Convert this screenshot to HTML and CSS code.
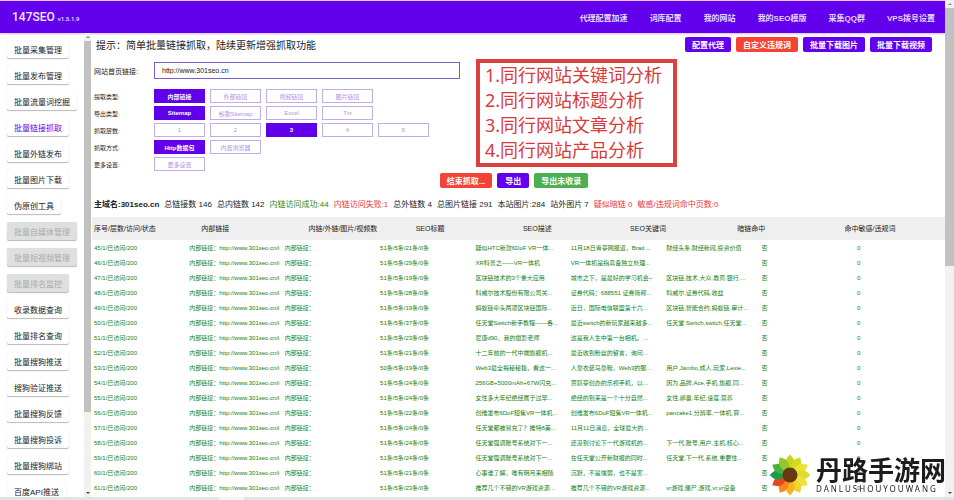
FILE: index.html
```html
<!DOCTYPE html>
<html lang="zh-CN">
<head>
<meta charset="utf-8">
<title>147SEO</title>
<link rel="stylesheet" href="styles.css">
</head>
<body>
<div class="window">
  <div class="page">
    <header class="topbar">
      <div class="brand">147SEO <small>v1.5.1.9</small></div>
      <nav class="topnav">
        <a href="#">代理配置加速</a><a href="#">词库配置</a><a href="#">我的网站</a><a href="#">我的SEO模版</a><a href="#">采集QQ群</a><a href="#">VPS拨号设置</a>
      </nav>
    </header>
    <div class="body">
      <aside class="sidebar">
        <button>批量采集管理</button>
        <button>批量发布管理</button>
        <button>批量流量词挖掘</button>
        <button class="current">批量链接抓取</button>
        <button>批量外链发布</button>
        <button>批量图片下载</button>
        <button>伪原创工具</button>
        <button disabled>批量自媒体管理</button>
        <button disabled>批量短视频管理</button>
        <button disabled>批量排名监控</button>
        <button>收录数据查询</button>
        <button>批量排名查询</button>
        <button>批量搜狗推送</button>
        <button>搜狗验证推送</button>
        <button>批量搜狗反馈</button>
        <button>批量搜狗投诉</button>
        <button>批量搜狗绑站</button>
        <button>百度API推送</button>
      </aside>
      <div class="scroll side-scroll"><i class="up"></i><div class="thumb"></div><i class="down"></i></div>
      <main class="main">
        <div class="hint-row">
          <p class="hint">提示：简单批量链接抓取，陆续更新增强抓取功能</p>
          <div class="buttons">
            <button class="btn">配置代理</button>
            <button class="btn red">自定义违规词</button>
            <button class="btn">批量下载图片</button>
            <button class="btn">批量下载视频</button>
          </div>
        </div>
        <div class="url-row">
          <label for="url">网站首页链接:</label>
          <input id="url" type="text" value="http://www.301seo.cn">
        </div>
        <div class="options">
          <div class="option"><span>提取类型:</span><button class="on">内部链接</button><button>外部链接</button><button>视频链接</button><button>图片链接</button></div>
          <div class="option"><span>导出类型:</span><button class="on">Sitemap</button><button>谷歌Sitemap</button><button>Excel</button><button>Txt</button></div>
          <div class="option"><span>抓取层数:</span><button>1</button><button>2</button><button class="on">3</button><button>4</button><button>5</button></div>
          <div class="option"><span>抓取方式:</span><button class="on">Http数据包</button><button>内置浏览器</button></div>
          <div class="option"><span>更多设置:</span><button>更多设置</button></div>
        </div>
        <div class="actions">
          <button class="btn red">结束抓取...</button>
          <button class="btn">导出</button>
          <button class="btn green">导出未收录</button>
        </div>
        <div class="stats">
          <b>主域名:301seo.cn</b><span>总链接数 146</span><span>总内链数 142</span><span class="ok">内链访问成功:44</span><span class="bad">内链访问失败:1</span><span>总外链数 4</span><span>总图片链接 291</span><span>本站图片:284</span><span>站外图片 7</span><span class="bad">疑似暗链 0</span><span class="bad">敏感/违规词命中页数:0</span>
        </div>
        <table>
          <thead>
            <tr><th>序号/层数/访问/状态</th><th>内部链接</th><th>内链/外链/图片/视频数</th><th>SEO标题</th><th>SEO描述</th><th>SEO关键词</th><th>暗链命中</th><th>命中敏感/违规词</th></tr>
          </thead>
          <tbody>
            <tr><td>45/1/已访问/200</td><td>内部链接：http://www.301seo.cn/i</td><td>内部链接：</td><td>51条/5条/21条/0条</td><td>疑似HTC新款6DoF VR一体...</td><td>11月18日青亭网报道，Brad ...</td><td>财经头条,财经新闻,投资价值</td><td>否</td><td>0</td></tr>
            <tr><td>46/1/已访问/200</td><td>内部链接：http://www.301seo.cn/i</td><td>内部链接：</td><td>51条/5条/29条/0条</td><td>XR科普之——VR一体机</td><td>VR一体机是指具备独立处理...</td><td></td><td>否</td><td>0</td></tr>
            <tr><td>47/1/已访问/200</td><td>内部链接：http://www.301seo.cn/i</td><td>内部链接：</td><td>51条/5条/19条/0条</td><td>区块链技术的3个重大应用</td><td>城市之下，是最好的学习机会~</td><td>区块链,技术,大众,教育,银行,...</td><td>否</td><td>0</td></tr>
            <tr><td>48/1/已访问/200</td><td>内部链接：http://www.301seo.cn/i</td><td>内部链接：</td><td>51条/5条/28条/0条</td><td>科威尔技术股份有限公司关...</td><td>证券代码：688551 证券简称...</td><td>科威尔,证券代码,收益</td><td>否</td><td>0</td></tr>
            <tr><td>49/1/已访问/200</td><td>内部链接：http://www.301seo.cn/i</td><td>内部链接：</td><td>51条/5条/19条/0条</td><td>蚂蚁链牵头两项区块链国际...</td><td>近日，国际电信联盟第十六...</td><td>区块链,智能合约,蚂蚁链,审计...</td><td>否</td><td>0</td></tr>
            <tr><td>50/1/已访问/200</td><td>内部链接：http://www.301seo.cn/i</td><td>内部链接：</td><td>51条/5条/37条/0条</td><td>任天堂Switch新手教程——各...</td><td>最近switch的新玩家越来越多...</td><td>任天堂 Switch,switch,任天堂...</td><td>否</td><td>0</td></tr>
            <tr><td>51/1/已访问/200</td><td>内部链接：http://www.301seo.cn/i</td><td>内部链接：</td><td>51条/5条/23条/0条</td><td>尼康d90、我的摄影老师</td><td>这是我人生中第一台相机。...</td><td></td><td>否</td><td>0</td></tr>
            <tr><td>52/1/已访问/200</td><td>内部链接：http://www.301seo.cn/i</td><td>内部链接：</td><td>51条/5条/21条/0条</td><td>十二年前的一代中端旗舰机...</td><td>最近收到粉丝的留言，询问...</td><td></td><td>否</td><td>0</td></tr>
            <tr><td>53/1/已访问/200</td><td>内部链接：http://www.301seo.cn/i</td><td>内部链接：</td><td>50条/5条/19条/0条</td><td>Web3最全揭秘秘籍，看这一...</td><td>人靠衣装马靠鞍，Web3的服...</td><td>用户,Jambo,成人,玩家,Lexie...</td><td>否</td><td>0</td></tr>
            <tr><td>54/1/已访问/200</td><td>内部链接：http://www.301seo.cn/i</td><td>内部链接：</td><td>51条/5条/24条/0条</td><td>256GB+5000mAh+67W闪充...</td><td>贾跃亭创办的乐视手机，以...</td><td>因为,品牌,Ace,手机,旗舰,同...</td><td>否</td><td>0</td></tr>
            <tr><td>55/1/已访问/200</td><td>内部链接：http://www.301seo.cn/i</td><td>内部链接：</td><td>51条/5条/24条/0条</td><td>女性多大年纪绝经属于过早...</td><td>绝经的到来是一个十分自然...</td><td>女性,卵巢,年纪,速度,营养</td><td>否</td><td>0</td></tr>
            <tr><td>56/1/已访问/200</td><td>内部链接：http://www.301seo.cn/i</td><td>内部链接：</td><td>51条/5条/22条/0条</td><td>创维发布6DoF短焦VR一体机...</td><td>创维发布6DoF短焦VR一体机...</td><td>pancake1,分辨率,一体机,算...</td><td>否</td><td>0</td></tr>
            <tr><td>57/1/已访问/200</td><td>内部链接：http://www.301seo.cn/i</td><td>内部链接：</td><td>51条/5条/24条/0条</td><td>任天堂都被冒充了？推特8美...</td><td>11月11日消息，全球最大的...</td><td></td><td>否</td><td>0</td></tr>
            <tr><td>58/1/已访问/200</td><td>内部链接：http://www.301seo.cn/i</td><td>内部链接：</td><td>51条/5条/24条/0条</td><td>任天堂强调账号系统对下一...</td><td>还没到讨论下一代游戏机的...</td><td>下一代,账号,用户,主机,核心...</td><td>否</td><td>0</td></tr>
            <tr><td>59/1/已访问/200</td><td>内部链接：http://www.301seo.cn/i</td><td>内部链接：</td><td>51条/5条/24条/0条</td><td>任天堂强调账号系统对下一...</td><td>在任天堂公开新财报的同时...</td><td>任天堂,下一代,系统,重要性...</td><td>否</td><td>0</td></tr>
            <tr><td>60/1/已访问/200</td><td>内部链接：http://www.301seo.cn/i</td><td>内部链接：</td><td>51条/5条/21条/0条</td><td>心事谁了解，唯有明月来相随</td><td>沉默，不是懦弱，也不是害...</td><td></td><td>否</td><td>0</td></tr>
            <tr><td>61/1/已访问/200</td><td>内部链接：http://www.301seo.cn/i</td><td>内部链接：</td><td>51条/5条/23条/0条</td><td>推荐几个不错的VR游戏资源...</td><td>推荐几个不错的VR游戏资源...</td><td>vr游戏,僵尸,游戏,vr,vr设备</td><td>否</td><td>0</td></tr>
          </tbody>
        </table>
        <div class="note">1.同行网站关键词分析<br>2.同行网站标题分析<br>3.同行网站文章分析<br>4.同行网站产品分析</div>
      </main>
    </div>
  </div>
  <div class="scroll page-scroll"><i class="up"></i><div class="thumb"></div><i class="down"></i></div>
</div>
<div class="bottom-scroll"><div></div></div>
<div class="watermark">
  <svg viewBox="-21 -21 42 42" width="42" height="42" aria-hidden="true">
    <defs><path id="petal" d="M0-3C-4-7-6-13-3-17L0-20.500L3-17C6-13 4-7 0-3Z"/></defs>
    <use href="#petal" fill="#c5d420"/>
    <use href="#petal" fill="#d3da22" transform="rotate(30)"/>
    <use href="#petal" fill="#e8e337" transform="rotate(60)"/>
    <use href="#petal" fill="#dfdc30" transform="rotate(90)"/>
    <use href="#petal" fill="#f1e23a" transform="rotate(120)"/>
    <use href="#petal" fill="#eed52c" transform="rotate(150)"/>
    <use href="#petal" fill="#f7b325" transform="rotate(180)"/>
    <use href="#petal" fill="#f08a20" transform="rotate(210)"/>
    <use href="#petal" fill="#e5481f" transform="rotate(240)"/>
    <use href="#petal" fill="#1e9b49" transform="rotate(270)"/>
    <use href="#petal" fill="#4caf3c" transform="rotate(300)"/>
    <use href="#petal" fill="#93c52c" transform="rotate(330)"/>
    <circle r="7.500" fill="#6b3710"/>
  </svg>
  <div class="wm-text"><strong>丹路手游网</strong><span>DANLUSHOUYOUWANG</span></div>
</div>
</body>
</html>
```
FILE: styles.css
```css
* { box-sizing: border-box; }
body {
  margin: 0;
  height: 100vh;
  display: flex;
  flex-direction: column;
  overflow: hidden;
  background: #fff;
  color: #222;
  font-family: "Liberation Sans", "Noto Sans CJK SC", sans-serif;
  font-size: 8px;
}
button, input { font: inherit; margin: 0; }
button { border: 0; padding: 0; white-space: nowrap; }
p { margin: 0; }

.window { flex: 1; min-height: 0; display: flex; }
.page { flex: 1; min-width: 0; display: flex; flex-direction: column; }

.topbar {
  flex: none;
  height: 33px;
  padding: 0 10px 0 12px;
  display: flex;
  align-items: center;
  justify-content: space-between;
  background: #6200ee;
  border-top: 1px solid #e9c8f2;
  box-shadow: 0 1px 2px #d9b8ff;
  color: #f3e8ff;
}
.brand { font: 500 12px Roboto, sans-serif; }
.brand small { font-size: 6px; }
.topnav { display: flex; gap: 22px; font-weight: bold; }
.topnav a { color: #e6d6ff; text-decoration: none; }

.body { flex: 1; min-height: 0; display: flex; }
.sidebar {
  flex: none;
  width: 84px;
  padding: 7px 0 0 7px;
  overflow: hidden;
  display: flex;
  flex-direction: column;
  align-items: flex-start;
  gap: 8px;
}
.sidebar button {
  flex: none;
  height: 18px;
  padding: 0 7px;
  border-radius: 2px;
  background: #fff;
  color: #222;
  box-shadow: 0 1px 1px #b8b8b8, 0 0 1px #e4e4e4;
}
.sidebar .current { color: #6200ee; }
.sidebar button:disabled { background: #dfdfdf; color: #aaa; }

.scroll { flex: none; display: flex; flex-direction: column; align-items: center; background: #f1f1f1; }
.scroll .thumb { width: 100%; background: #c1c1c1; }
.scroll i { border: 2px solid transparent; }
.scroll .up { border-bottom-color: #888; border-top: 0; margin: 3px 0; }
.scroll .down { border-top-color: #444; border-bottom: 0; margin: auto 0 3px; }
.side-scroll { width: 7px; }
.side-scroll .thumb { height: 80%; }
.page-scroll { width: 9px; }
.page-scroll .thumb { height: 52%; }
.bottom-scroll { flex: none; height: 3px; background: #e3e3e3; }
.bottom-scroll div { width: 25px; height: 3px; margin-left: 23%; background: #f6f6f6; }

.main { flex: 1; min-width: 0; overflow: hidden; position: relative; padding: 4px 0 0 1px; }
.hint-row { display: flex; justify-content: space-between; align-items: center; padding: 0 13px 0 4px; height: 15px; }
.hint { font-size: 10px; }
.buttons, .actions { display: flex; gap: 5px; }
.btn {
  height: 15px;
  min-width: 32px;
  padding: 0 7px;
  border-radius: 2px;
  background: #6200ee;
  color: #fff;
  font-weight: bold;
}
.red { background: #f44336; }
.green { background: #4caf50; }

.url-row { display: flex; align-items: center; margin-top: 10px; padding-left: 2px; font-size: 7px; }
.url-row label { width: 60px; }
.url-row input {
  width: 36%;
  height: 17px;
  padding: 0 7px;
  border: 1px solid #7b5fc8;
  outline: 0;
  color: #222;
  background: #fff;
}

.options { display: flex; flex-direction: column; gap: 3px; margin-top: 10px; padding-left: 2px; font-size: 6px; }
.option { display: flex; align-items: center; gap: 5px; }
.option span { width: 55px; }
.option button { width: 51px; height: 14px; border: 1px solid #c0aee6; background: #fff; color: #b292e6; }
.option .on { background: #5f00e8; border-color: #5f00e8; color: #fff; font-weight: bold; }

.actions { justify-content: center; margin-top: 2px; padding-right: 9px; }

.stats { display: flex; gap: 5px; margin-top: 11px; padding-left: 2px; line-height: 12px; white-space: nowrap; }
.ok { color: #1c8a1c; }
.bad { color: #e8353f; }

table { display: block; margin-top: 6px; }
thead, tbody { display: block; }
tr { display: grid; grid-template-columns: repeat(8, 11.18%) 1fr; }
thead tr { grid-template-columns: repeat(7, 12.57%) 1fr; background: #efefef; }
th, td { padding: 0 0 0 2px; text-align: left; white-space: nowrap; }
th { font-size: 7px; font-weight: normal; line-height: 23px; }
td { font-size: 6px; line-height: 15px; color: #128012; overflow: hidden; }
tbody { padding-top: 1px; }

.note {
  position: absolute;
  top: 26px;
  left: 385px;
  padding: 0 11px 0 5px;
  border: 4px solid #dd4040;
  color: #d83a3a;
  font-family: "Noto Sans", "Noto Sans CJK SC", sans-serif;
  font-size: 18px;
  line-height: 25px;
  white-space: nowrap;
}

.watermark { position: fixed; right: 8px; bottom: 4px; display: flex; align-items: center; gap: 5px; color: #1c1c1c; }
.wm-text { display: flex; flex-direction: column; }
.wm-text strong { font: bold 26px/28px "Noto Sans CJK SC", sans-serif; }
.wm-text span { font: 8px/12px "Noto Sans", sans-serif; letter-spacing: 2px; }
```
